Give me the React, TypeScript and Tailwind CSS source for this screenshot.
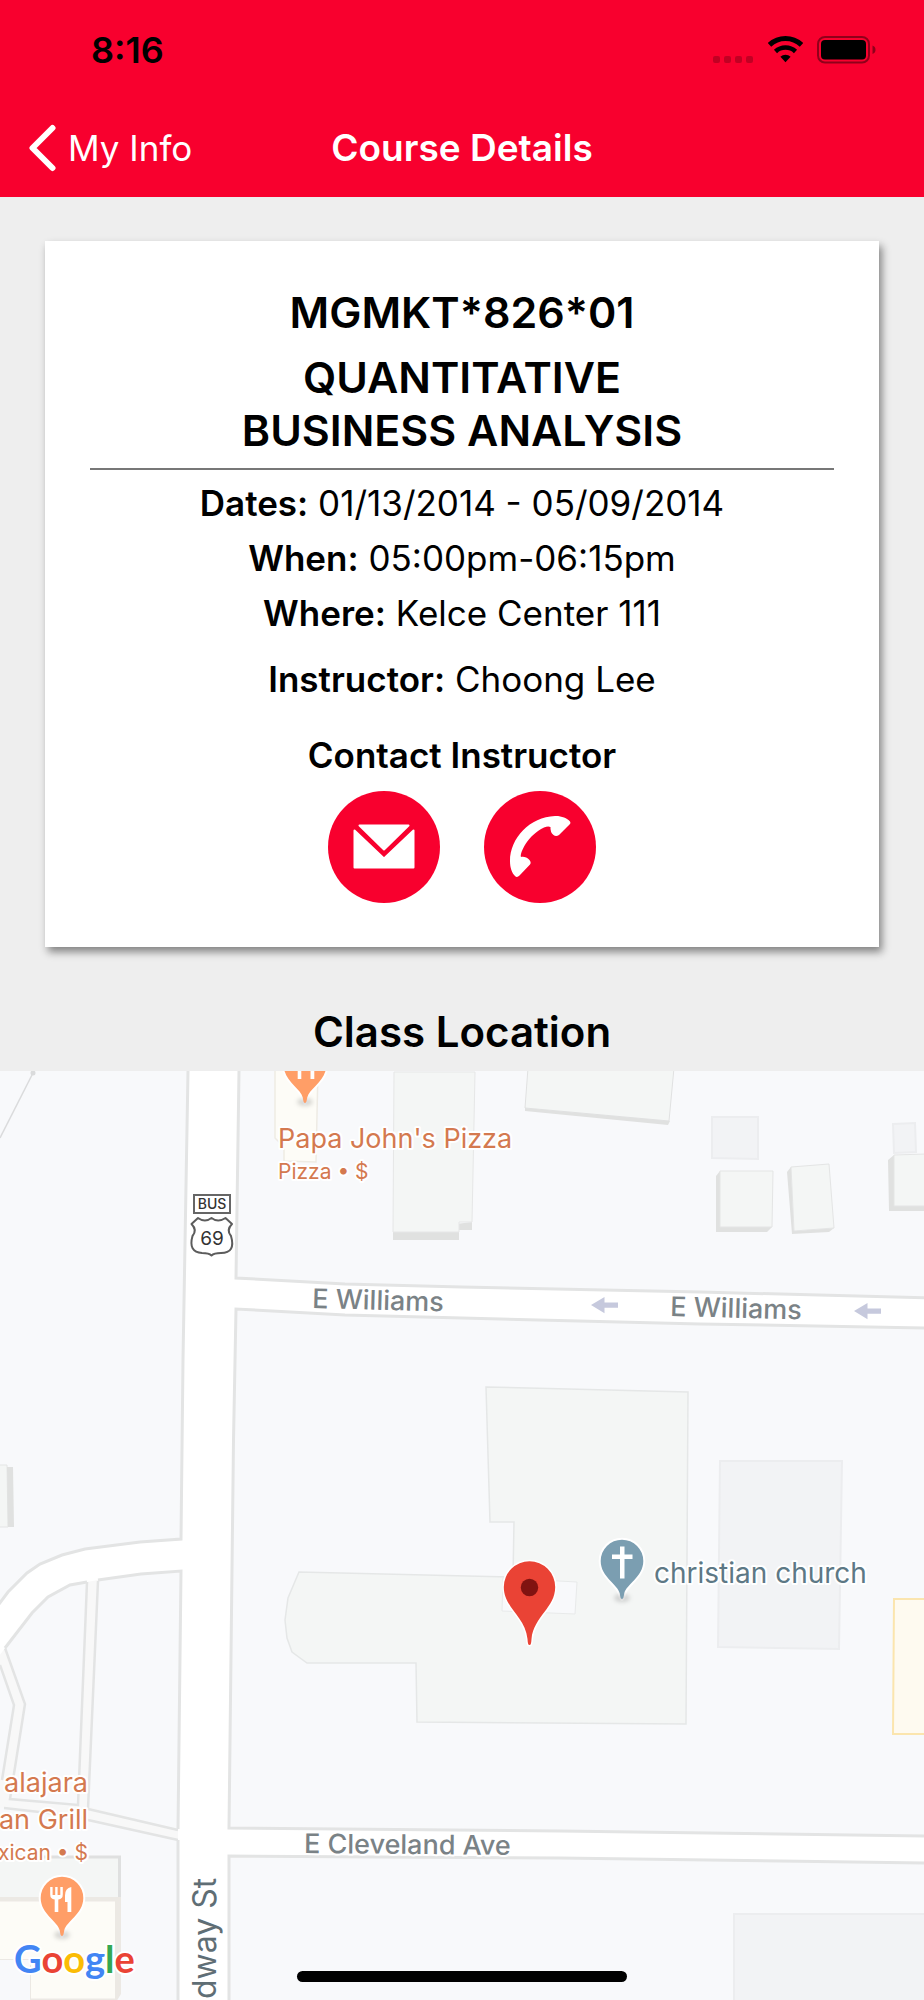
import React from "react";

const ROAD_EDGE = "#e3e4e4";
const BUILDING = "#f4f6f5";
const BUILDING_SIDE = "#e0e1e0";
const FOOD_TEXT = "#d4794f";

function StatusBar() {
  return (
    <div className="flex h-[100px] items-center justify-between pr-[47px] pl-[91px] text-black">
      <span className="text-[36px] leading-10 font-semibold">8:16</span>
      <div className="flex items-center gap-[14px]">
        <svg width="42" height="28" viewBox="0 0 42 28" aria-hidden="true">
          <g fill="#000" fillOpacity="0.22">
            <rect x="1" y="20" width="7" height="7" rx="2" />
            <rect x="12" y="20" width="7" height="7" rx="2" />
            <rect x="23" y="20" width="7" height="7" rx="2" />
            <rect x="34" y="20" width="7" height="7" rx="2" />
          </g>
        </svg>
        <svg width="35" height="28" viewBox="0 0 35 28" aria-hidden="true">
          <g fill="none" stroke="#000">
            <path d="M1.500 8.800A23.500 23.500 0 0 1 33.500 8.800" strokeWidth="5" />
            <path d="M7.500 15.500A14.700 14.700 0 0 1 27.500 15.500" strokeWidth="4.600" />
          </g>
          <path d="M12.400 20.700A7.500 7.500 0 0 1 22.600 20.700L17.500 26.300Z" fill="#000" />
        </svg>
        <svg width="60" height="28" viewBox="0 0 60 28" aria-hidden="true">
          <rect x="1" y="1" width="51" height="25.500" rx="7" fill="none" stroke="#000" strokeOpacity="0.42" strokeWidth="2" />
          <rect x="4" y="4" width="45" height="19.500" rx="4" fill="#000" />
          <path d="M55.500 9.500Q58.500 10.500 58.500 13.700T55.500 18Z" fill="#000" fillOpacity="0.42" />
        </svg>
      </div>
    </div>
  );
}

function NavBar() {
  return (
    <nav className="grid h-[97px] grid-cols-[1fr_auto_1fr] items-center pb-[2px] text-white">
      <a href="#my-info" className="flex items-center gap-3 pl-7 text-[35px] leading-10 font-normal">
        <svg width="28" height="48" viewBox="0 0 28 48" fill="none" aria-hidden="true">
          <path d="M24.500 4L4.500 24L24.500 44" stroke="#fff" strokeWidth="6" strokeLinecap="round" strokeLinejoin="round" />
        </svg>
        My Info
      </a>
      <h1 className="text-[37px] leading-10 font-semibold">Course Details</h1>
    </nav>
  );
}

function Detail({ label, value }: { label: string; value: string }) {
  return (
    <p className="text-[35px] leading-[48px]">
      <span className="font-semibold">{label}:</span> {value}
    </p>
  );
}

function CourseCard() {
  return (
    <section className="mx-[45px] mt-11 flex flex-col bg-white px-[45px] pt-[45px] pb-11 text-center shadow-[3px_5px_8px_rgba(0,0,0,0.45)]">
      <header className="border-b-2 border-[#777] pb-[11px] text-[43px] leading-[53px] font-semibold">
        <h2 className="[font-feature-settings:'calt'_0]">MGMKT*826*01</h2>
        <h3 className="mt-3">
          QUANTITATIVE
          <br />
          BUSINESS ANALYSIS
        </h3>
      </header>
      <div className="mt-[9px] flex flex-col gap-[7px]">
        <Detail label="Dates" value="01/13/2014 - 05/09/2014" />
        <Detail label="When" value="05:00pm-06:15pm" />
        <Detail label="Where" value="Kelce Center 111" />
      </div>
      <div className="mt-[18px]">
        <Detail label="Instructor" value="Choong Lee" />
      </div>
      <h4 className="mt-7 text-[35px] leading-[48px] font-semibold">Contact Instructor</h4>
      <div className="mt-3 flex justify-center gap-11">
        <a href="#email" aria-label="Email instructor" className="block size-28 rounded-full bg-[#f8002e]">
          <svg viewBox="0 0 112 112" fill="#fff" stroke="#fff" strokeWidth="2" strokeLinejoin="round" aria-hidden="true">
            <path d="M31.500 34.500H80.500L56 58.500Z" />
            <path d="M26.500 39.500L56 67.500L85.500 39.500V76.500H26.500Z" />
          </svg>
        </a>
        <a href="#call" aria-label="Call instructor" className="block size-28 rounded-full bg-[#f8002e]">
          <svg viewBox="0 0 112 112" fill="#fff" aria-hidden="true">
            <path d="M86 30.500C83 27 77 24.700 71 25C46 26 26 47 26 70C26 77 28 82 31 85Q33 87 35.500 84.500L46 73.500Q47.500 71.500 45.500 69C43 66 39.500 65.500 37 66C35.500 62 44 44 60 36.500Q64 35 66.500 36Q66 41 69.500 44Q72 46 75 44L86 33Q87 32 86 30.500Z" />
          </svg>
        </a>
      </div>
    </section>
  );
}

/* Tip of the pin sits at the group's origin. */
function PinShape({ fill }: { fill: string }) {
  const outline =
    "M0 0C-1.500 0-1.800-3-2.200-5.500C-4.500-15-21.300-22-21.300-38A21.300 21.300 0 0 1 21.300-38C21.300-22 4.500-15 2.200-5.500C1.800-3 1.500 0 0 0Z";
  return (
    <>
      <path d={outline} fill="none" stroke="#fff" strokeWidth="4" />
      <ellipse cx="0" cy="-1" rx="8" ry="4" fill="#000" fillOpacity="0.15" className="blur-[2px]" />
      <path d={outline} fill={fill} />
    </>
  );
}

function FoodPin({ x, y }: { x: number; y: number }) {
  return (
    <g transform={`translate(${x} ${y})`}>
      <PinShape fill="#ff9e67" />
      <g fill="#fff">
        <path d="M-11.800-49V-41.500Q-11.800-37-7.300-36.500V-24H-3.700V-36.500Q.8-37 .8-41.500V-49H-1.700V-41H-4.400V-49H-6.800V-41H-9.400V-49Z" />
        <path d="M9.300-49Q3-48 3-40.500V-34H5.500V-24H9.300Z" />
      </g>
    </g>
  );
}

function ArrowLeft({ x, y }: { x: number; y: number }) {
  return <path transform={`translate(${x} ${y})`} d="M0 0L13.500-8V-2.500H27V2.800H13.500V8.300Z" fill="#c6c9dd" />;
}

function CampusMap() {
  return (
    <svg
      viewBox="0 1071 924 929"
      className="block w-full bg-[#f8f9fb] font-[Inter,'Liberation_Sans',sans-serif]"
      role="img"
      aria-label="Map of the class location"
    >
      {/* footpath */}
      <path d="M33 1073L0 1138" stroke="#dadbdc" strokeWidth="1.500" />
      <circle cx="33" cy="1073" r="2.500" fill="#dadbdc" />

      {/* service roads */}
      <g fill="#f8f8f8" stroke="none">
        <path d="M0 1650L5 1648L25 1704L10 1800L89 1807L178 1829V1841L88 1820L0 1808V1772L3 1772L14 1705L0 1665Z" />
        <path d="M87 1580H98L88 1806L78 1806Z" />
      </g>
      <g fill="none" stroke={ROAD_EDGE} strokeWidth="2.500">
        <path d="M5 1648L25 1704L10 1799L78 1805L87 1582" />
        <path d="M0 1665L14 1705L2 1780" />
        <path d="M98 1581L88 1809L178 1830" />
        <path d="M4 1808L75 1816L88 1820L178 1840" />
      </g>

      {/* streets */}
      <path
        d="M188 1071H239L236 1278L345 1284L462 1287L700 1292L930 1298V1328L700 1324L462 1318L345 1315L236 1309L233.500 1440L229 1828L560 1831L930 1836V1863L560 1858L229 1856V2002H178V1840L181 1571L141 1574L98 1580L70 1585L48 1597L32 1613L5 1648L-4 1660V1608L8 1592L27 1573L40 1564L62 1555L85 1549L140 1542L181 1539L183 1360Z"
        fill="#fff"
      />
      <g fill="none" stroke={ROAD_EDGE} strokeWidth="3">
        <path d="M188 1071L183 1360L181 1539L140 1542L85 1549L62 1555L40 1564L27 1573L8 1592L-4 1608" />
        <path d="M5 1648L32 1613L48 1597L70 1585L87 1582" />
        <path d="M98 1580L141 1574L181 1571L178 1829" />
        <path d="M178 1840V2002" />
        <path d="M239 1071L236 1278L345 1284L462 1287L700 1292L930 1298" />
        <path d="M930 1328L700 1324L462 1318L345 1315L236 1309L233.500 1440L229 1828L560 1831L930 1836" />
        <path d="M930 1863L560 1858L229 1856V2002" />
      </g>

      {/* restaurant buildings */}
      <path d="M275 1068V1138L279 1142L284 1141V1161L316 1162L318 1068Z" fill="#fdfcf7" stroke="#eeebe4" strokeWidth="1.500" />
      <path d="M-2 1856H118V1898H-2Z" fill={BUILDING} />
      <path d="M-2 1857H119.500V1898" fill="none" stroke="#dfe0e0" strokeWidth="3" />
      <path d="M-2 1897H121V1994L116 2002H30V1960H-2Z" fill="#ece9e4" />
      <path d="M-2 1901.500H115V1998.500H31V1959H-2Z" fill="#fdfcf7" />
      <path d="M-2 1960H30V1998.500H-2Z" fill="#f8f9fb" />

      {/* buildings with raised sides */}
      <path d="M393 1232V1240H459V1230H472V1222Z" fill={BUILDING_SIDE} />
      <path d="M394 1072H475L472 1222H459V1232H393Z" fill={BUILDING} stroke="#e6e7e7" strokeWidth="1" />
      <path d="M525 1108V1111L668 1125L670 1121Z" fill={BUILDING_SIDE} />
      <path d="M528 1068L525 1108L669 1121L674 1068Z" fill={BUILDING} stroke="#e0e1e1" strokeWidth="1" />
      <path d="M716 1176L720 1171V1227H772L767 1232H716Z" fill={BUILDING_SIDE} />
      <path d="M720 1171H773L772 1227H720Z" fill={BUILDING} stroke="#e4e5e5" strokeWidth="1" />
      <path d="M787 1172L791 1167L794 1231L834 1228L829 1232L792 1234Z" fill={BUILDING_SIDE} />
      <path d="M791 1167L829 1164L834 1228L794 1231Z" fill={BUILDING} stroke="#e4e5e5" strokeWidth="1" />
      <path d="M888 1160L894 1155V1206H926V1211H889Z" fill={BUILDING_SIDE} />
      <path d="M894 1155L926 1154V1206H894Z" fill={BUILDING} stroke="#e4e5e5" strokeWidth="1" />
      <path d="M-2 1465H7L8 1527H-2Z" fill={BUILDING} stroke="#e4e5e5" strokeWidth="1" />
      <path d="M7 1467H13L14 1527H8Z" fill={BUILDING_SIDE} />

      {/* flat lots */}
      <g fill="#f2f3f5" stroke="#ecedef" strokeWidth="2">
        <path d="M712 1117H758V1159L712 1158Z" />
        <path d="M893 1124L915 1123L916 1152L894 1153Z" />
        <path d="M720 1461H842L839 1649L718 1647Z" />
        <path d="M734 1914H930V2006H734Z" />
      </g>
      <path d="M894 1599H930V1734H893Z" fill="#fefaf0" stroke="#fbe5ae" strokeWidth="2" />

      {/* college building and its courtyard */}
      <path
        d="M486 1387L688 1392L686 1724L417 1722L416 1663H307L292 1652L287 1638L285 1620L288 1598L299 1572L513 1577L514 1522H490Z"
        fill={BUILDING}
        stroke="#e5e7e7"
        strokeWidth="1.500"
      />
      <path d="M503 1578L577 1582L575 1614L502 1611Z" fill="#f8f9fb" stroke="#e8eaea" strokeWidth="1" />

      {/* route markers */}
      <rect x="194" y="1195" width="36" height="18" fill="#fff" stroke="#666" strokeWidth="2" />
      <path
        d="M198 1218Q205 1223 211.500 1218Q218 1223 225.500 1218L232 1224Q226 1230 231 1236Q236 1253 221 1253Q214 1253 211.500 1255.500Q209 1253 202 1253Q188 1252 192.500 1236Q197.500 1230 191.500 1224Z"
        fill="#fff"
        stroke="#5c5c5c"
        strokeWidth="2"
        strokeLinejoin="round"
      />
      <g fill="#333" textAnchor="middle" fontWeight="500">
        <text x="212" y="1209" fontSize="14">BUS</text>
        <text x="212" y="1245" fontSize="19" fontWeight="400">69</text>
      </g>
      <ArrowLeft x={591} y={1305} />
      <ArrowLeft x={854} y={1311} />

      {/* street names */}
      <g fill="#7a8286" fontSize="27" fontWeight="500" stroke="#fff" strokeWidth="4" strokeLinejoin="round" paintOrder="stroke">
        <text transform="translate(312 1308) rotate(1.500)">E Williams</text>
        <text transform="translate(670 1316) rotate(1.500)">E Williams</text>
        <text transform="translate(304 1853) rotate(0.500)">E Cleveland Ave</text>
        <text transform="translate(216 1999) rotate(-90)" fontSize="32" fontWeight="400" fill="#5f6e75">dway St</text>
      </g>

      {/* places */}
      <FoodPin x={305} y={1103} />
      <FoodPin x={62} y={1936} />
      <g fill={FOOD_TEXT} stroke="#fff" strokeWidth="4" strokeLinejoin="round" paintOrder="stroke">
        <text x="278" y="1148" fontSize="27">Papa John's Pizza</text>
        <text x="278" y="1179" fontSize="21">Pizza • $</text>
        <g textAnchor="end">
          <text x="88" y="1792" fontSize="27">alajara</text>
          <text x="88" y="1829" fontSize="27">an Grill</text>
          <text x="88" y="1860" fontSize="21">xican • $</text>
        </g>
      </g>
      <text x="654" y="1583" fontSize="28" fill="#5d7885" stroke="#fff" strokeWidth="4" strokeLinejoin="round" paintOrder="stroke">
        christian church
      </text>
      <g transform="translate(622 1599)">
        <PinShape fill="#7b9eb1" />
        <path d="M-2-52.500H2.500V-44.500H10.500V-40H2.500V-20.500H-2V-40H-10V-44.500H-2Z" fill="#fff" />
      </g>
      <path
        d="M529.500 1645C528 1645 527.800 1643 527.500 1639C525 1616 503.800 1608 503.800 1587A25.700 25.700 0 0 1 555.200 1587C555.200 1608 534 1616 531.500 1639C531.200 1643 531 1645 529.500 1645Z"
        fill="#ea4335"
        stroke="#fff"
        strokeWidth="3"
        paintOrder="stroke"
      />
      <circle cx="529.500" cy="1587.500" r="8.700" fill="#801311" />

      {/* attribution */}
      <text
        x="14"
        y="1973"
        fontSize="38"
        fontWeight="700"
        className="font-[Lato,sans-serif]"
        stroke="#fff"
        strokeWidth="4"
        strokeLinejoin="round"
        paintOrder="stroke"
      >
        <tspan fill="#4285f4">G</tspan>
        <tspan fill="#ea4335">o</tspan>
        <tspan fill="#fbbc05">o</tspan>
        <tspan fill="#4285f4">g</tspan>
        <tspan fill="#34a853">l</tspan>
        <tspan fill="#ea4335">e</tspan>
      </text>
    </svg>
  );
}

export default function App() {
  return (
    <main className="relative flex min-h-screen flex-col bg-[#eee] font-[Inter,'Liberation_Sans',sans-serif] text-black">
      <div className="bg-[#f8002e]">
        <StatusBar />
        <NavBar />
      </div>
      <CourseCard />
      <h2 className="mt-[58px] pb-[13px] text-center text-[42px] leading-[53px] font-semibold">Class Location</h2>
      <CampusMap />
      <div className="absolute inset-x-0 bottom-[18px] flex justify-center">
        <div className="h-[11px] w-[330px] rounded-full bg-black" />
      </div>
    </main>
  );
}
